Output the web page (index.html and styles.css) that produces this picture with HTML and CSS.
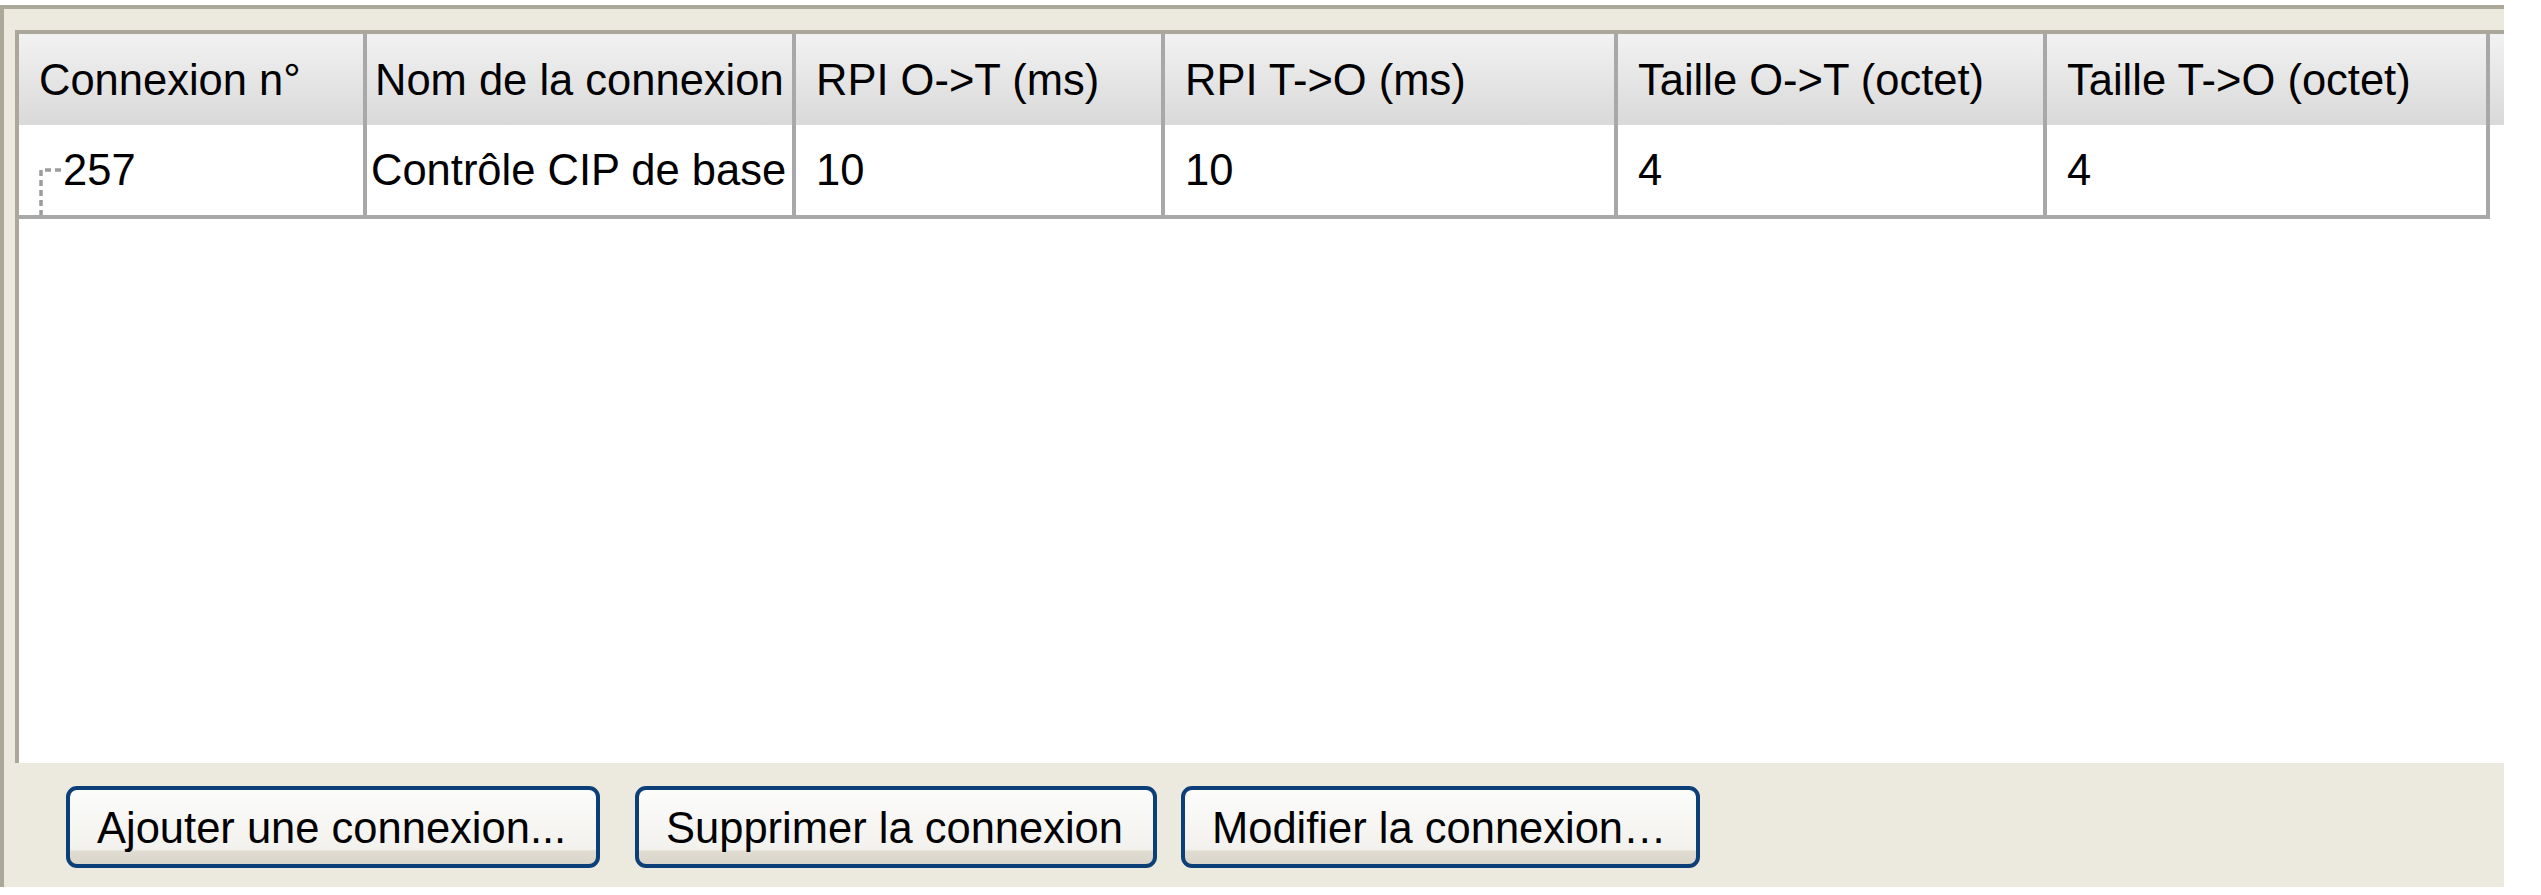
FILE: index.html
```html
<!DOCTYPE html>
<html>
<head>
    <title>Connexions</title>
    <link rel="stylesheet" href="styles.css">
</head>
<body>
    <div class="panel">
        <div class="grid-frame">
            <div class="grid-head">
                <div class="cell">Connexion n°</div>
                <div class="cell cell-name">Nom de la connexion</div>
                <div class="cell">RPI O-&gt;T (ms)</div>
                <div class="cell">RPI T-&gt;O (ms)</div>
                <div class="cell">Taille O-&gt;T (octet)</div>
                <div class="cell">Taille T-&gt;O (octet)</div>
                <div class="filler"></div>
            </div>
            <div class="grid-row">
                <div class="cell cell-tree">
                    <svg class="tree-line" width="24" height="47" viewBox="0 0 24 47">
                        <line x1="2" y1="2" x2="2" y2="47" stroke="#9c9c9c" stroke-width="3.5" stroke-dasharray="6 4"/>
                        <line x1="6" y1="2" x2="22" y2="2" stroke="#9c9c9c" stroke-width="3.5" stroke-dasharray="6 4"/>
                    </svg>
                    <span class="tree-text">257</span>
                </div>
                <div class="cell cell-name">Contrôle CIP de base</div>
                <div class="cell">10</div>
                <div class="cell">10</div>
                <div class="cell">4</div>
                <div class="cell">4</div>
            </div>
        </div>
        <div class="actions">
            <button class="btn btn-add">Ajouter une connexion...</button>
            <button class="btn btn-del">Supprimer la connexion</button>
            <button class="btn btn-edit">Modifier la connexion…</button>
        </div>
    </div>
</body>
</html>
```

FILE: styles.css
```css
body {
    margin: 0;
    background-color: #fff;
    font-family: "Liberation Sans", Arial, sans-serif;
    color: #000;
}
.panel {
    box-sizing: border-box;
    width: 2504px;
    height: 882px;
    margin-top: 5px;
    border-top: 4px solid #aca899;
    border-left: 4px solid #aca899;
    background-color: #ece9df;
    display: flex;
    flex-direction: column;
}
.grid-frame {
    box-sizing: border-box;
    height: 733px;
    margin: 21px 0 0 11px;
    border-top: 4px solid #aca899;
    border-left: 4px solid #aca899;
    background-color: #fff;
}
.grid-head,
.grid-row {
    display: grid;
    grid-template-columns: 348px 429px 369px 453px 429px 443px 1fr;
    font-size: 43.5px;
    line-height: 50px;
}
.grid-head {
    height: 91px;
    background: linear-gradient(to bottom, #f2f2f2, #d9d9d9);
}
.cell {
    box-sizing: border-box;
    display: flex;
    align-items: center;
    border-right: 4px solid #a8a8a8;
    padding-left: 20px;
    white-space: nowrap;
    overflow: hidden;
}
.grid-head .cell-name {
    padding-left: 8px;
}
.grid-row .cell {
    height: 94px;
    border-bottom: 4px solid #a8a8a8;
}
.grid-row .cell-name {
    padding-left: 4px;
}
.tree-line {
    flex: none;
    align-self: flex-end;
}
.actions {
    flex: 1;
    display: flex;
    align-items: flex-start;
    padding: 23px 0 0 62px;
}
.btn {
    box-sizing: border-box;
    height: 82px;
    padding: 2px 0 0 27px;
    border: 4px solid #0c3f78;
    border-radius: 11px;
    background: linear-gradient(to bottom, #fcfcfb 0%, #f2f1ed 80%, #e0dcd2 83%, #d9d5ca 100%);
    font-family: "Liberation Sans", Arial, sans-serif;
    font-size: 43.5px;
    line-height: 50px;
    color: #000;
    text-align: left;
    white-space: nowrap;
}
.btn-add {
    width: 534px;
    margin-right: 35px;
}
.btn-del {
    width: 522px;
    margin-right: 24px;
}
.btn-edit {
    width: 519px;
}
```
